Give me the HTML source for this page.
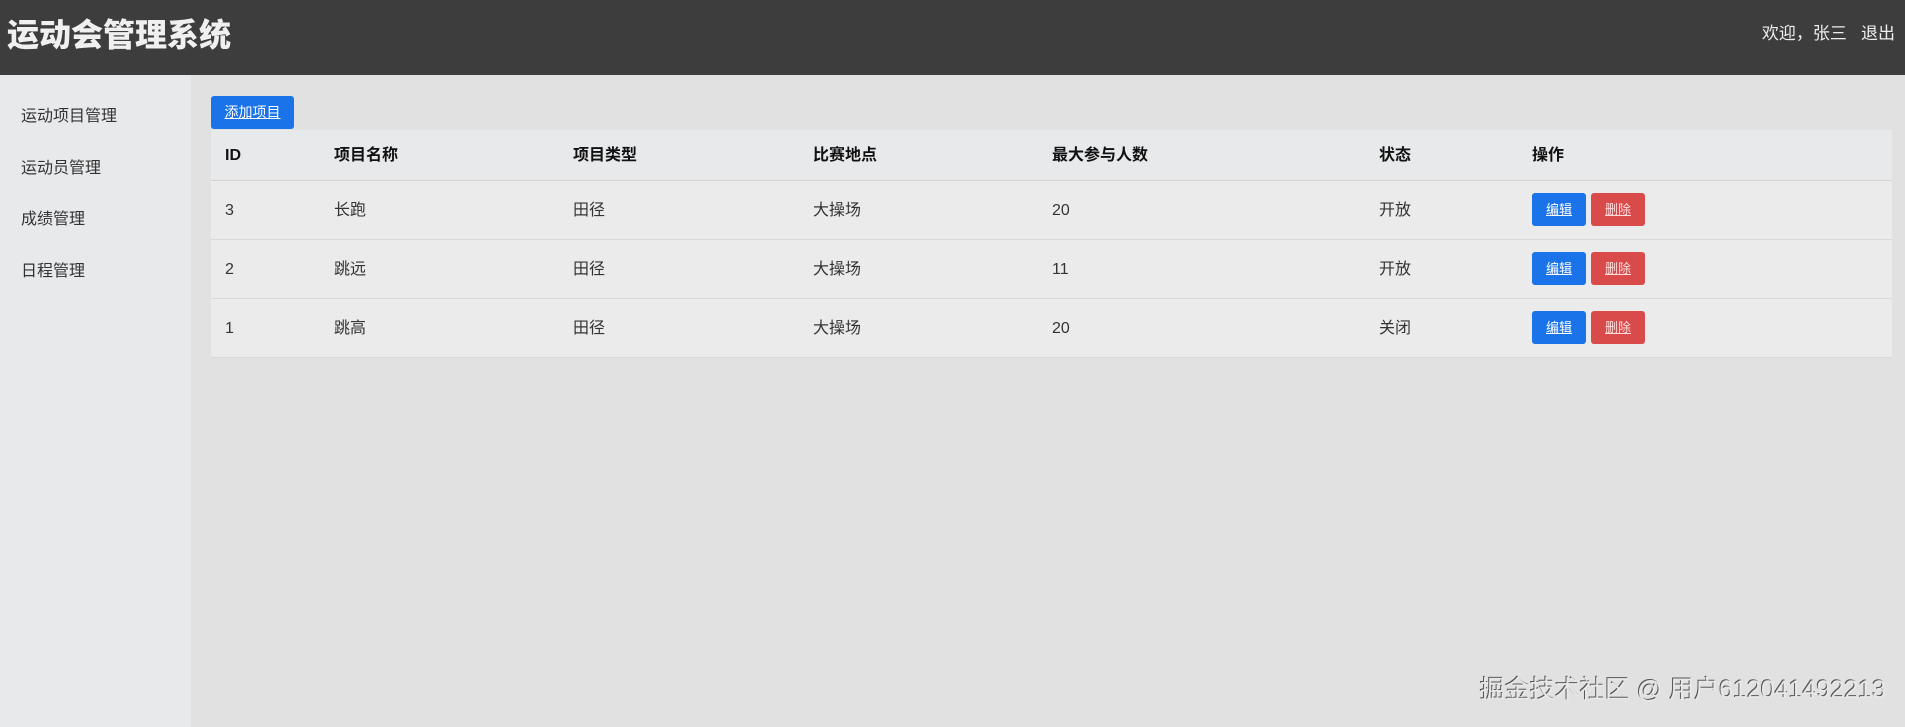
<!DOCTYPE html>
<html><head><meta charset="utf-8"><style>
*{margin:0;padding:0;box-sizing:border-box}
body{width:1905px;height:727px;overflow:hidden;background:#e1e1e1;font-family:"Liberation Sans","Noto Sans CJK SC",sans-serif;color:#222;position:relative}
.hd{position:absolute;left:0;top:0;width:1905px;height:75px;background:#3d3d3d;color:#f0f0f0}
.hd h1{position:absolute;left:7px;top:14px;font-size:32px;font-weight:900;line-height:42px;letter-spacing:0}
.hd .r{position:absolute;right:10px;top:23px;font-size:17px;line-height:22px;color:#eee}
.sb{position:absolute;left:0;top:75px;width:191px;height:652px;background:#e8e9eb}
.sb div{position:absolute;left:21px;font-size:16px;color:#333;line-height:20px}
.btn{position:absolute;color:#fff;text-decoration:underline;font-size:14px;border-radius:3px;text-align:center}
.add{left:211px;top:96px;width:83px;height:33px;line-height:33px;background:#1a73e8}
table{position:absolute;left:211px;top:130px;width:1681px;border-collapse:collapse;font-size:16px;line-height:20px}
th{text-align:left;font-weight:bold;height:50px;background:#e8e9eb;color:#111;border-bottom:1px solid #d4d4d4;vertical-align:middle;padding:2px 0 0 14px}
td{height:59px;background:#ebebeb;border-bottom:1px solid #d8d8d8;color:#333;vertical-align:middle;padding:4px 0 0 14px}
th span,td span{display:inline-block;line-height:20px;height:20px;vertical-align:middle}
.e,.d{position:absolute;width:54px;height:33px;line-height:33px;font-size:13px}
.e{background:#1a73e8}.d{background:#d94a4a;color:#fdd}
.wm{position:absolute;left:1480px;top:675px;font-size:25px;color:#e8e8e8;text-shadow:-1px -1px 0 #555;line-height:30px;white-space:nowrap}
</style></head><body>
<div class="hd"><h1>运动会管理系统</h1><div class="r">欢迎，张三&nbsp;&nbsp;&nbsp;退出</div></div>
<div class="sb">
<div style="top:32px">运动项目管理</div>
<div style="top:84px">运动员管理</div>
<div style="top:135px">成绩管理</div>
<div style="top:187px">日程管理</div>
</div>
<div class="btn add">添加项目</div>
<table>
<colgroup><col style="width:109px"><col style="width:239px"><col style="width:240px"><col style="width:239px"><col style="width:327px"><col style="width:153px"><col></colgroup>
<tr><th><span>ID</span></th><th><span>项目名称</span></th><th><span>项目类型</span></th><th><span>比赛地点</span></th><th><span>最大参与人数</span></th><th><span>状态</span></th><th><span>操作</span></th></tr>
<tr><td><span>3</span></td><td><span>长跑</span></td><td><span>田径</span></td><td><span>大操场</span></td><td><span>20</span></td><td><span>开放</span></td><td></td></tr>
<tr><td><span>2</span></td><td><span>跳远</span></td><td><span>田径</span></td><td><span>大操场</span></td><td><span>11</span></td><td><span>开放</span></td><td></td></tr>
<tr><td><span>1</span></td><td><span>跳高</span></td><td><span>田径</span></td><td><span>大操场</span></td><td><span>20</span></td><td><span>关闭</span></td><td></td></tr>
</table>
<div class="btn e" style="left:1532px;top:193px">编辑</div><div class="btn d" style="left:1591px;top:193px">删除</div>
<div class="btn e" style="left:1532px;top:252px">编辑</div><div class="btn d" style="left:1591px;top:252px">删除</div>
<div class="btn e" style="left:1532px;top:311px">编辑</div><div class="btn d" style="left:1591px;top:311px">删除</div>
<div class="wm">掘金技术社区 @ 用户612041492213</div>
</body></html>
